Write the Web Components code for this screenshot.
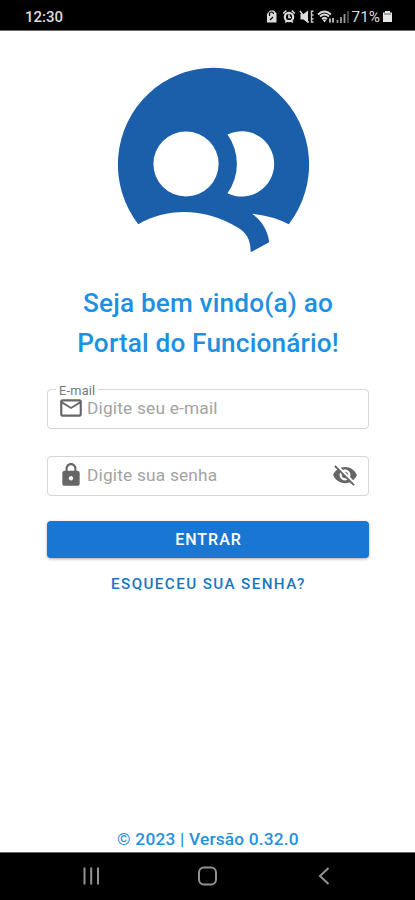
<!DOCTYPE html>
<html lang="pt-BR">
<head>
<meta charset="utf-8">
<meta name="viewport" content="width=device-width, initial-scale=1">
<title>Portal do Funcionário</title>
<style>
  body {
    margin: 0;
    font-family: Roboto, "Liberation Sans", sans-serif;
    background: #fff;
  }
</style>
</head>
<body>
<login-page>
  <status-bar slot="top" time="12:30" battery="71%"></status-bar>
  <brand-logo></brand-logo>
  <welcome-title><span>Seja bem vindo(a) ao</span><span>Portal do Funcionário!</span></welcome-title>
  <text-field label="E-mail" icon="mail">Digite seu e-mail</text-field>
  <text-field icon="lock" end="eyeOff">Digite sua senha</text-field>
  <app-button>ENTRAR</app-button>
  <app-button variant="text">ESQUECEU SUA SENHA?</app-button>
  <version-note slot="footer">© 2023 | Versão 0.32.0</version-note>
  <nav-bar slot="bottom"></nav-bar>
</login-page>

<script>
const icons = {
  mail: `<path d="M22 6c0-1.1-.9-2-2-2H4c-1.1 0-2 .9-2 2v12c0 1.1.9 2 2 2h16c1.1 0 2-.9 2-2V6zm-2 0-8 5-8-5h16zm0 12H4V8l8 5 8-5v10z"/>`,
  lock: `<path d="M18 8h-1V6c0-2.760-2.240-5-5-5S7 3.240 7 6v2H6c-1.100 0-2 .9-2 2v10c0 1.100.9 2 2 2h12c1.100 0 2-.9 2-2V10c0-1.100-.9-2-2-2zm-6 9c-1.100 0-2-.9-2-2s.9-2 2-2 2 .9 2 2-.9 2-2 2zm3.100-9H8.900V6c0-1.710 1.390-3.100 3.100-3.100 1.710 0 3.100 1.390 3.100 3.100v2z"/>`,
  eyeOff: `<path d="M12 7c2.760 0 5 2.240 5 5 0 .65-.13 1.260-.36 1.830l2.920 2.920c1.510-1.260 2.700-2.890 3.430-4.750-1.730-4.390-6-7.500-11-7.500-1.400 0-2.740.25-3.980.7l2.160 2.160C10.740 7.130 11.350 7 12 7zM2 4.270l2.280 2.280.46.46C3.080 8.300 1.780 10.020 1 12c1.730 4.390 6 7.500 11 7.500 1.550 0 3.030-.3 4.380-.84l.42.42L19.730 22 21 20.730 3.270 3 2 4.270zM7.530 9.800l1.550 1.550c-.05.21-.08.43-.08.65 0 1.660 1.340 3 3 3 .22 0 .44-.03.65-.08l1.550 1.550c-.67.33-1.410.53-2.200.53-2.760 0-5-2.240-5-5 0-.79.2-1.530.53-2.200zm4.310-.78 3.150 3.150.02-.16c0-1.660-1.340-3-3-3l-.17.01z"/>`,
};

const icon = (name) => `<svg viewBox="0 0 24 24" width="24" height="24" fill="currentColor">${icons[name]}</svg>`;

class LoginPage extends HTMLElement {
  constructor() {
    super();
    this.attachShadow({ mode: "open" }).innerHTML = `
      <style>
        :host { display: flex; flex-direction: column; height: 900px; overflow: hidden; }
        main { flex: 1; display: flex; flex-direction: column; padding: 36px 46px 0 47px; }
        ::slotted(text-field) { margin-bottom: 27px; }
        ::slotted(text-field[end]) { margin-bottom: 25px; }
      </style>
      <slot name="top"></slot>
      <main><slot></slot></main>
      <slot name="footer"></slot>
      <slot name="bottom"></slot>
    `;
  }
}

class StatusBar extends HTMLElement {
  constructor() {
    super();
    this.attachShadow({ mode: "open" });
  }

  connectedCallback() {
    this.shadowRoot.innerHTML = `
      <style>
        :host {
          display: flex; justify-content: space-between; align-items: center;
          box-sizing: border-box; height: 31px; padding: 3px 22px 0 25px;
          background: #000; color: #dcdcdc; border-bottom: 1px solid #6b6b6b;
          font-size: 15px; font-weight: 500; flex: none;
        }
        div { display: flex; align-items: center; }
        div span { margin-right: 2px; font-size: 15.3px; font-weight: 400; }
        svg { display: block; }
      </style>
      <span>${this.getAttribute("time")}</span>
      <div>
        <svg width="86" height="18" viewBox="266 7 86 18" fill="#dcdcdc">
          <path d="M267 13l3-3.500h4l2.500 3v9h-9.500z"/>
          <path d="M269.500 15v-2a2 2 0 0 1 4 0M270 19l3-3" fill="none" stroke="#000" stroke-width="1.200"/>
          <circle cx="289" cy="16" r="4.200" fill="none" stroke="#dcdcdc" stroke-width="2.200"/>
          <path d="M283.300 12.500l3-3M294.800 12.500l-3-3M285.300 21.500l1.500-1.500M292.800 21.500l-1.500-1.500M289 13.500v3h2" fill="none" stroke="#dcdcdc" stroke-width="1.700"/>
          <path d="M300.500 13h3l4.500-3.500v12.500l-4.500-3.500h-3z"/>
          <path d="M300 10l8.500 11.500" stroke="#dcdcdc" stroke-width="1.500"/>
          <path d="M313.500 10.300h-2v3.700h2M313.500 14h-2v4h2M311.500 18v3h2" fill="none" stroke="#c8c8c8" stroke-width="1.400"/>
          <path d="M318 13.500q6.500-6 13 0M320 15.500q4.500-4 9 0M322 18q2.500-2.500 5 0" fill="none" stroke="#dcdcdc" stroke-width="1.800"/>
          <path d="M322.500 18.500h4l-2 3z"/>
          <path d="M330 21.500v-4M333 17v4.500" stroke="#dcdcdc" stroke-width="1.600"/>
          <path d="M337.500 22v-3M341 22v-6M344.500 22v-9" stroke="#999" stroke-width="1.800"/>
          <path d="M348 22v-12" stroke="#444" stroke-width="2"/>
        </svg>
        <span>${this.getAttribute("battery")}</span>
        <svg width="11" height="14" viewBox="0 0 11 14" fill="#e6e6e6">
          <path d="M3 2.500v-1.500h5v1.500h2v9.500h-9v-9.500z"/>
          <path d="M2 4h7" stroke="#666"/>
        </svg>
      </div>
    `;
  }
}

class BrandLogo extends HTMLElement {
  constructor() {
    super();
    this.attachShadow({ mode: "open" }).innerHTML = `
      <style>
        :host { display: block; height: 186px; padding-left: 70px; }
        svg { display: block; }
      </style>
      <svg width="194" height="186" viewBox="117 67 194 186">
        <path fill="#1b5fab" d="M138.200 224.200A95.600 96.800 0 1 1 288.800 224.200Q272 215.500 252 213.700C261 220 268 230 269.200 242.300L250.600 252.300C251 240 246 232.500 238.500 228C207 209 170 206 138.200 224.200Z"/>
        <circle cx="186" cy="164" r="32.600" fill="#fff"/>
        <path fill="#fff" d="M227.500 134.500A32.600 32.600 0 1 1 227.500 193.300A50.700 50.700 0 0 0 227.500 134.500Z"/>
      </svg>
    `;
  }
}

class WelcomeTitle extends HTMLElement {
  constructor() {
    super();
    this.attachShadow({ mode: "open" }).innerHTML = `
      <style>
        :host {
          display: flex; flex-direction: column; align-items: center;
          padding: 30px 0 26px; color: #1e90e3;
          font-size: 26.2px; font-weight: 500; line-height: 40px; letter-spacing: 0.15px;
        }
      </style>
      <slot></slot>
    `;
  }
}

class TextField extends HTMLElement {
  constructor() {
    super();
    this.attachShadow({ mode: "open" });
  }

  connectedCallback() {
    const label = this.getAttribute("label");
    const end = this.getAttribute("end");
    this.shadowRoot.innerHTML = `
      <style>
        :host {
          display: flex; align-items: center; box-sizing: border-box; position: relative;
          height: 40px; padding: 0 10px 2px; border: 1px solid #d6d6d6; border-radius: 4px;
          color: #a3a3a3; font-size: 17.3px; letter-spacing: 0.2px;
        }
        svg { display: block; flex: none; color: #666; width: 26px; height: 26px; }
        .value { flex: 1; padding-left: 3px; }
        label {
          position: absolute; top: -7px; left: 8px; padding: 0 3px;
          background: #fff; color: #777; font-size: 12.8px; line-height: 16px;
        }
      </style>
      ${label ? `<label>${label}</label>` : ""}
      ${icon(this.getAttribute("icon"))}
      <span class="value"><slot></slot></span>
      ${end ? icon(end) : ""}
    `;
  }
}

class AppButton extends HTMLElement {
  constructor() {
    super();
    this.attachShadow({ mode: "open" }).innerHTML = `
      <style>
        :host { display: block; }
        button {
          display: block; width: 100%; height: 37px; padding: 0 0 0 1px; border: 0; border-radius: 4px;
          background: #1976d2; color: #fff; font: 500 16px Roboto, sans-serif; letter-spacing: 1px;
          box-shadow: 0 1px 3px rgba(0, 0, 0, .35);
        }
        :host([variant="text"]) button {
          margin-top: 7px; background: none; color: #1976c4; box-shadow: none;
          font-size: 15.2px; letter-spacing: 1.4px;
        }
      </style>
      <button><slot></slot></button>
    `;
  }
}

class VersionNote extends HTMLElement {
  constructor() {
    super();
    this.attachShadow({ mode: "open" }).innerHTML = `
      <style>
        :host {
          display: block; flex: none; height: 24px; line-height: 22px; text-align: center;
          color: #2490e0; font-size: 17.3px; font-weight: 500; letter-spacing: 0.2px; padding-left: 1px;
        }
      </style>
      <slot></slot>
    `;
  }
}

class NavBar extends HTMLElement {
  constructor() {
    super();
    this.attachShadow({ mode: "open" }).innerHTML = `
      <style>
        :host {
          display: flex; justify-content: space-between; align-items: center; flex: none;
          box-sizing: border-box; height: 48px; padding: 0 85px 1px 82px;
          background: #000; border-top: 1px solid #6b6b6b;
        }
        svg { display: block; fill: none; stroke: #929292; stroke-width: 2; }
      </style>
      <svg width="18" height="20"><path d="M2.500 1.500v17M9.200 1.500v17M16 1.500v17"/></svg>
      <svg width="20" height="20"><rect x="1" y="1.500" width="17" height="17" rx="5"/></svg>
      <svg width="14" height="20"><path d="M12.500 2L4 10l8.500 8"/></svg>
    `;
  }
}

customElements.define("login-page", LoginPage);
customElements.define("status-bar", StatusBar);
customElements.define("brand-logo", BrandLogo);
customElements.define("welcome-title", WelcomeTitle);
customElements.define("text-field", TextField);
customElements.define("app-button", AppButton);
customElements.define("version-note", VersionNote);
customElements.define("nav-bar", NavBar);
</script>
</body>
</html>
